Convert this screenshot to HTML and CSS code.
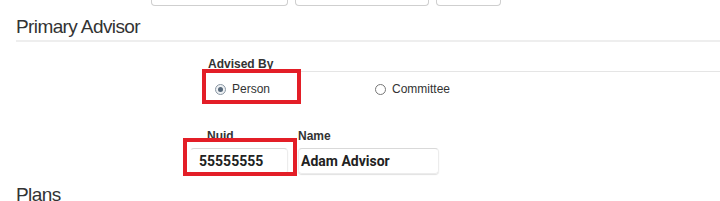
FILE: index.html
```html
<!DOCTYPE html>
<html lang="en">
<head>
  <meta charset="UTF-8">
  <meta name="viewport" content="width=device-width, initial-scale=1.0">
  <title>Primary Advisor</title>
  <link rel="stylesheet" href="styles.css">
</head>
<body>
  <div class="prev-row">
    <div class="prev-box wide"></div>
    <div class="prev-box mid"></div>
    <div class="prev-box small"></div>
  </div>

  <h2 class="section-title">Primary Advisor</h2>

  <div class="group">
    <div class="group-label">Advised By</div>
    <div class="radio-row">
      <label class="option">
        <span class="radio checked"></span>
        <span>Person</span>
        <span class="annot annot-person"></span>
      </label>
      <label class="option">
        <span class="radio"></span>
        <span>Committee</span>
      </label>
    </div>

    <div class="fields">
      <div class="field nuid">
        <div class="field-label">Nuid</div>
        <div class="text-input">55555555</div>
        <span class="annot annot-nuid"></span>
      </div>
      <div class="field name">
        <div class="field-label">Name</div>
        <div class="text-input">Adam Advisor</div>
      </div>
    </div>
  </div>

  <h2 class="section-title plans">Plans</h2>
</body>
</html>
```

FILE: styles.css
```css
body {
  margin: 0;
  font-family: "Liberation Sans", Arial, sans-serif;
  color: #333;
  background-color: white;
  overflow: hidden;
}

.prev-row {
  display: flex;
  gap: 7px;
  padding-left: 151px;
}

.prev-box {
  height: 6px;
  border: 1px solid #cfcfcf;
  border-top: none;
  border-radius: 0 0 4px 4px;
  box-sizing: border-box;
}

.prev-box.wide { width: 137px; }
.prev-box.mid { width: 134px; }
.prev-box.small { width: 65px; }

.section-title {
  margin: 10px 0 0 16px;
  padding-bottom: 2px;
  font-size: 19px;
  font-weight: normal;
  line-height: 22px;
  letter-spacing: -0.6px;
  color: #333;
  border-bottom: 2px solid #eeeeee;
}

.section-title.plans {
  margin-top: 10px;
  border-bottom: none;
}

.group {
  margin: 15px 0 0 205px;
}

.group-label {
  padding-left: 3px;
  font-size: 12px;
  font-weight: bold;
  line-height: 14px;
  border-bottom: 1px solid #e5e5e5;
}

.radio-row {
  display: flex;
  margin-top: 7px;
  padding-left: 10px;
  height: 20px;
}

.option {
  position: relative;
  display: flex;
  align-items: center;
  gap: 6px;
  width: 160px;
  font-size: 12px;
  color: #333;
}

.radio {
  width: 11px;
  height: 11px;
  border: 1px solid #777;
  border-radius: 50%;
  box-sizing: border-box;
  background-color: white;
  position: relative;
}

.radio.checked {
  border-color: #8a97a3;
  background-color: #eef1f4;
}

.radio.checked::after {
  content: "";
  position: absolute;
  left: 2px;
  top: 2px;
  width: 5px;
  height: 5px;
  border-radius: 50%;
  background-color: #56687a;
}

.fields {
  display: flex;
  margin-top: 30px;
}

.field {
  position: relative;
}

.field.nuid {
  width: 83px;
}

.field.name {
  width: 141px;
  margin-left: 10px;
}

.field-label {
  padding-left: 2px;
  font-size: 12px;
  font-weight: bold;
  line-height: 14px;
  color: #333;
}

.field.name .field-label {
  padding-left: 0;
}

.text-input {
  margin-top: 5px;
  height: 26px;
  box-sizing: border-box;
  border: 1px solid #ececec;
  border-top-color: #d9d9d9;
  border-radius: 4px;
  box-shadow: 0 1px 1px rgba(0, 0, 0, 0.12);
  font-family: Roboto, "Liberation Sans", sans-serif;
  font-size: 14px;
  font-weight: bold;
  line-height: 24px;
  color: #222;
  padding-left: 2px;
}

.field.nuid .text-input {
  margin-left: -15px;
  width: 98px;
  padding-left: 8px;
  border-left-color: transparent;
}

/* red annotation boxes drawn over the form */
.annot {
  position: absolute;
  border: 4px solid #e31e27;
  box-sizing: border-box;
}

.annot-person {
  left: -13px;
  top: -10px;
  width: 99px;
  height: 35px;
}

.annot-nuid {
  left: -22px;
  top: 9px;
  width: 114px;
  height: 38px;
}
```
